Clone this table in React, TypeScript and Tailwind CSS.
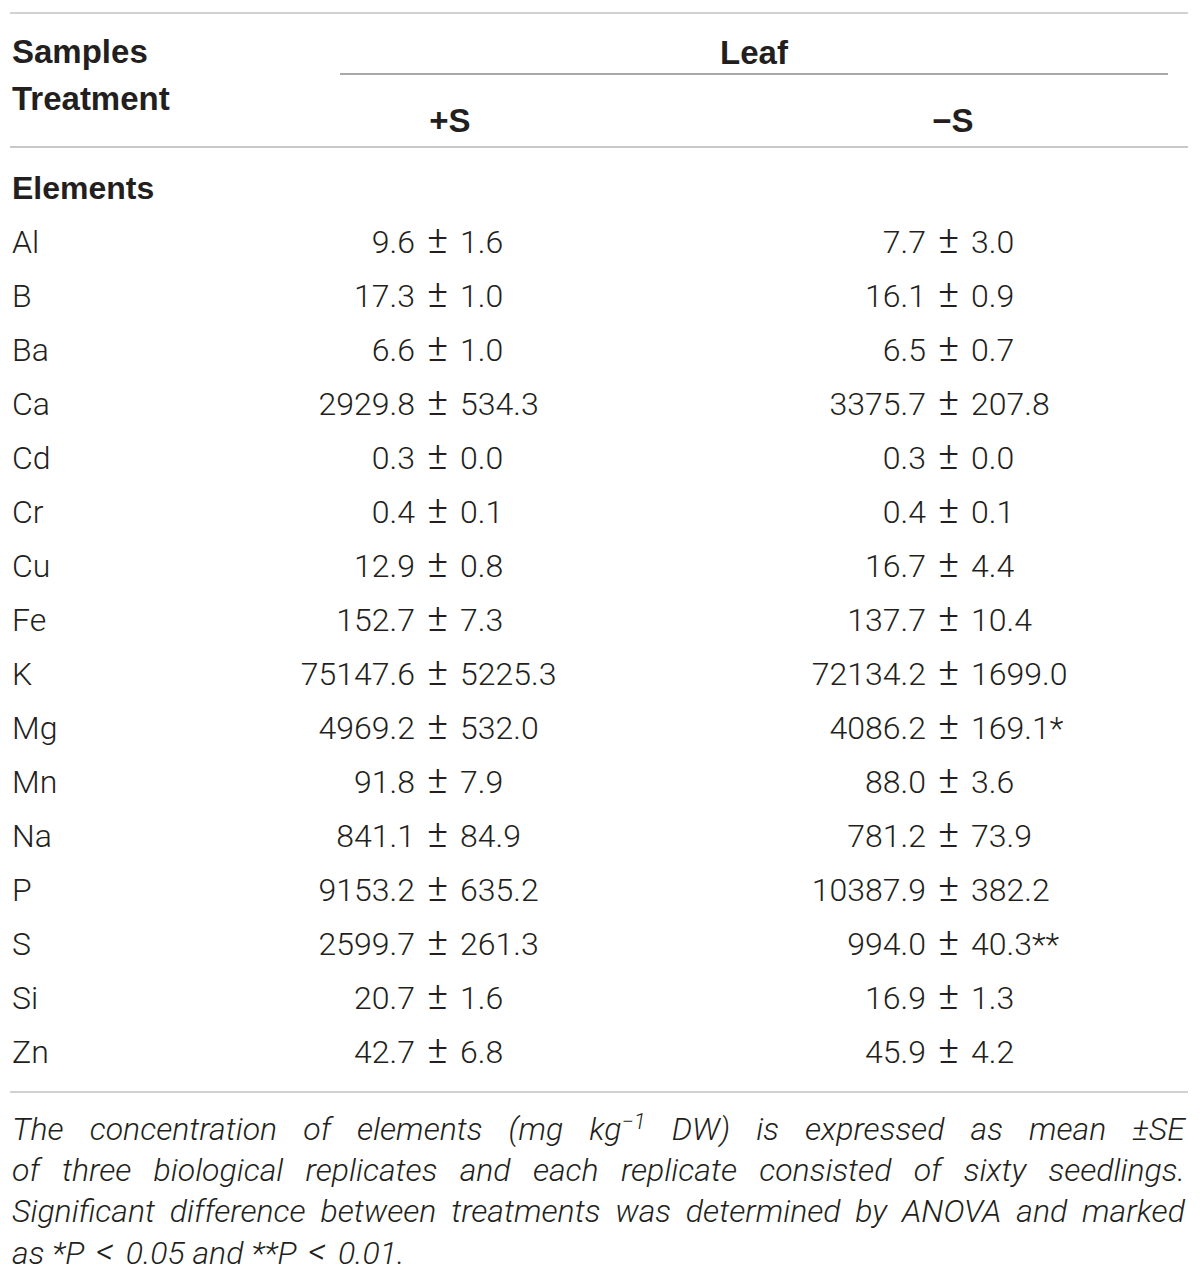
import React from "react";

type Row = { el: string; a: [string, string]; b: [string, string, string?] };

const rows: Row[] = [
  { el: "Al", a: ["9.6", "1.6"], b: ["7.7", "3.0"] },
  { el: "B", a: ["17.3", "1.0"], b: ["16.1", "0.9"] },
  { el: "Ba", a: ["6.6", "1.0"], b: ["6.5", "0.7"] },
  { el: "Ca", a: ["2929.8", "534.3"], b: ["3375.7", "207.8"] },
  { el: "Cd", a: ["0.3", "0.0"], b: ["0.3", "0.0"] },
  { el: "Cr", a: ["0.4", "0.1"], b: ["0.4", "0.1"] },
  { el: "Cu", a: ["12.9", "0.8"], b: ["16.7", "4.4"] },
  { el: "Fe", a: ["152.7", "7.3"], b: ["137.7", "10.4"] },
  { el: "K", a: ["75147.6", "5225.3"], b: ["72134.2", "1699.0"] },
  { el: "Mg", a: ["4969.2", "532.0"], b: ["4086.2", "169.1", "*"] },
  { el: "Mn", a: ["91.8", "7.9"], b: ["88.0", "3.6"] },
  { el: "Na", a: ["841.1", "84.9"], b: ["781.2", "73.9"] },
  { el: "P", a: ["9153.2", "635.2"], b: ["10387.9", "382.2"] },
  { el: "S", a: ["2599.7", "261.3"], b: ["994.0", "40.3", "**"] },
  { el: "Si", a: ["20.7", "1.6"], b: ["16.9", "1.3"] },
  { el: "Zn", a: ["42.7", "6.8"], b: ["45.9", "4.2"] },
];

const body = "[font-family:Roboto,'Liberation_Sans',sans-serif] font-light";
const bold = "[font-family:'Liberation_Sans',Arial,sans-serif] font-bold";

function JustLine({ words }: { words: React.ReactNode[] }) {
  return (
    <div className="flex justify-between whitespace-nowrap">
      {words.map((w, i) => (
        <span key={i}>{w}</span>
      ))}
    </div>
  );
}

export default function App() {
  return (
    <div className="min-h-[1282px] w-[1200px] bg-white pt-[12px] text-[#231f20]">
      <div className="mx-[10px] w-[1178px]">
        <div className="h-[2px] bg-[#d2d2d2]" />
        {/* header */}
        <div className={`flex h-[132px] ${bold} text-[33px]`}>
          <div className="w-[330px] pl-[2px] pt-[14px] leading-[47px]">
            <div>Samples</div>
            <div>Treatment</div>
          </div>
          <div className="w-[828px]">
            <div className="pt-[19px] text-center leading-[40px]">Leaf</div>
            <div className="h-[2px] bg-[#a9a9a9]" />
            <div className="flex pt-[26px] leading-[40px]">
              <div className="w-[220px] text-center">+S</div>
              <div className="ml-[283px] w-[220px] text-center">−S</div>
            </div>
          </div>
        </div>
        <div className="h-[2px] bg-[#c8c8c8]" />
        {/* body */}
        <div className="pt-[13px] pb-[12px] text-[32px] leading-[54px]">
          <div className={`h-[54px] pl-[2px] ${bold} text-[32px]`}>Elements</div>
          {rows.map((r) => (
            <div key={r.el} className={`flex h-[54px] items-baseline ${body}`}>
              <div className="w-[230px] pl-[2px]">{r.el}</div>
              <div className="w-[175px] text-right">{r.a[0]}</div>
              <div className="w-[45px] text-center text-[39px] leading-[49px]">±</div>
              <div className="w-[175px]">{r.a[1]}</div>
              <div className="w-[291px] text-right">{r.b[0]}</div>
              <div className="w-[45px] text-center text-[39px] leading-[49px]">±</div>
              <div className="flex-1">
                {r.b[1]}
                {r.b[2] ? <span>{r.b[2]}</span> : null}
              </div>
            </div>
          ))}
        </div>
        <div className="h-[2px] bg-[#d2d2d2]" />
        {/* footnote */}
        <div className={`pt-[16px] pl-[2px] pr-[3px] text-[32px] leading-[41px] italic ${body}`}>
          <JustLine
            words={[
              "The",
              "concentration",
              "of",
              "elements",
              "(mg",
              <>
                kg<sup className="text-[22px]">−1</sup>
              </>,
              "DW)",
              "is",
              "expressed",
              "as",
              "mean",
              "±SE",
            ]}
          />
          <JustLine
            words={"of three biological replicates and each replicate consisted of sixty seedlings.".split(" ")}
          />
          <JustLine
            words={"Significant difference between treatments was determined by ANOVA and marked".split(" ")}
          />
          <div className="whitespace-nowrap">
            as *P <span className="px-[4px] text-[36px] leading-[41px]">&lt;</span> 0.05 and **P{" "}
            <span className="px-[4px] text-[36px] leading-[41px]">&lt;</span> 0.01.
          </div>
        </div>
      </div>
    </div>
  );
}
